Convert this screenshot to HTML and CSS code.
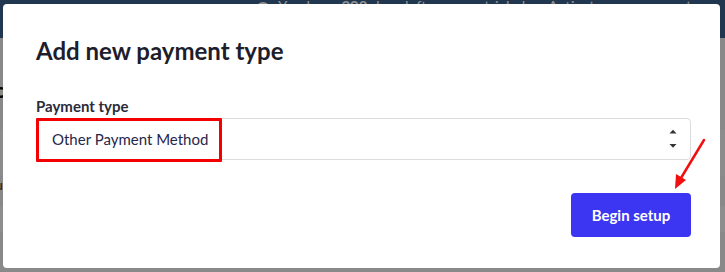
FILE: index.html
```html
<!DOCTYPE html>
<html>
<head>
<meta charset="utf-8">
<link rel="stylesheet" href="styles.css">
</head>
<body>
<div class="page">
  <div class="topbar">
    <span class="notice"><span class="notice-icon">i</span>You have <b>298</b> days left on your trial plan. Activate your account</span>
  </div>
  <div class="content">
    <div class="page-title">Payments</div>
    <div class="band band-a"></div>
    <div class="row-text">rules</div>
    <div class="band band-b"></div>
  </div>
</div>
<div class="overlay"></div>
<div class="modal">
  <h2 class="modal-title">Add new payment type</h2>
  <label class="field-label">Payment type</label>
  <div class="select">
    <span class="select-value">Other Payment Method</span>
    <span class="select-arrows">
      <svg width="8" height="20" viewBox="0 0 8 20"><path d="M0.5 4.5 L4 0.8 L7.5 4.5 Z" fill="#333"/><path d="M0.5 15 L4 18.7 L7.5 15 Z" fill="#333"/></svg>
    </span>
    <span class="highlight"></span>
  </div>
  <div class="actions">
    <button class="btn-primary">Begin setup</button>
  </div>
  <svg class="annot-arrow" width="60" height="60" viewBox="0 0 60 60">
    <line x1="43" y1="2" x2="20" y2="40" stroke="#f01010" stroke-width="2.5" stroke-linecap="round"/>
    <path d="M14 51 L15 36 L25 42 Z" fill="#f01010"/>
  </svg>
</div>
</body>
</html>
```
FILE: styles.css
```css
html, body {
  margin: 0;
  padding: 0;
  width: 725px;
  height: 272px;
  overflow: hidden;
  font-family: Lato, "Open Sans", sans-serif;
}
.page {
  width: 725px;
  height: 272px;
  background: #f4f4f4;
}
.topbar {
  height: 38px;
  background: #3b628d;
  display: flex;
  justify-content: flex-start;
  padding-left: 256px;
  box-sizing: border-box;
  color: #fff;
  font-size: 15px;
  line-height: 18px;
  overflow: hidden;
  white-space: nowrap;
}
.notice {
  margin-top: -3px;
}
.notice-icon {
  display: inline-block;
  width: 14px;
  height: 14px;
  line-height: 14px;
  border-radius: 50%;
  background: #fff;
  color: #3b628d;
  font-size: 10px;
  text-align: center;
  margin-right: 8px;
  vertical-align: -1px;
}
.content {
  display: flex;
  flex-direction: column;
}
.page-title {
  margin-top: 44px;
  margin-left: -6px;
  font-size: 22px;
  font-weight: 700;
  color: #111;
  height: 30px;
}
.band-a {
  height: 46px;
  margin-top: 18px;
  background: #fafafa;
}
.row-text {
  margin-left: -10px;
  font-size: 14px;
  color: #333;
  height: 30px;
}
.band-b {
  height: 26px;
  background: #fdfdfd;
}
.overlay {
  position: absolute;
  inset: 0;
  background: rgba(0, 0, 0, 0.44);
}
.modal {
  position: absolute;
  left: 3px;
  top: 4px;
  width: 717px;
  height: 264px;
  background: #fff;
  border-radius: 4px;
  box-sizing: border-box;
  padding: 32px 29px 0 33px;
  display: flex;
  flex-direction: column;
}
.modal-title {
  margin: 0;
  font-size: 24px;
  font-weight: 700;
  color: #1d1d2b;
  line-height: 29px;
}
.field-label {
  margin-top: 32px;
  font-size: 15px;
  font-weight: 700;
  color: #2b2b3a;
  line-height: 18px;
}
.select {
  position: relative;
  margin-top: 3px;
  height: 42px;
  box-sizing: border-box;
  border: 1px solid #dcdcdc;
  border-radius: 4px;
  display: flex;
  align-items: center;
  justify-content: space-between;
  padding: 0 13px 0 15px;
}
.select-value {
  font-size: 15px;
  color: #27274a;
}
.select-arrows {
  display: flex;
  align-items: center;
}
.highlight {
  position: absolute;
  left: -1px;
  top: -1px;
  width: 186px;
  height: 44px;
  box-sizing: border-box;
  border: 3px solid #f50000;
  border-radius: 1px;
}
.actions {
  display: flex;
  justify-content: flex-end;
  margin-top: 33px;
}
.btn-primary {
  width: 120px;
  height: 44px;
  border: none;
  border-radius: 4px;
  background: #3c35f2;
  color: #fff;
  font-family: Lato, "Open Sans", sans-serif;
  font-size: 15px;
  font-weight: 700;
}
.annot-arrow {
  position: absolute;
  left: 658px;
  top: 134px;
}
```
